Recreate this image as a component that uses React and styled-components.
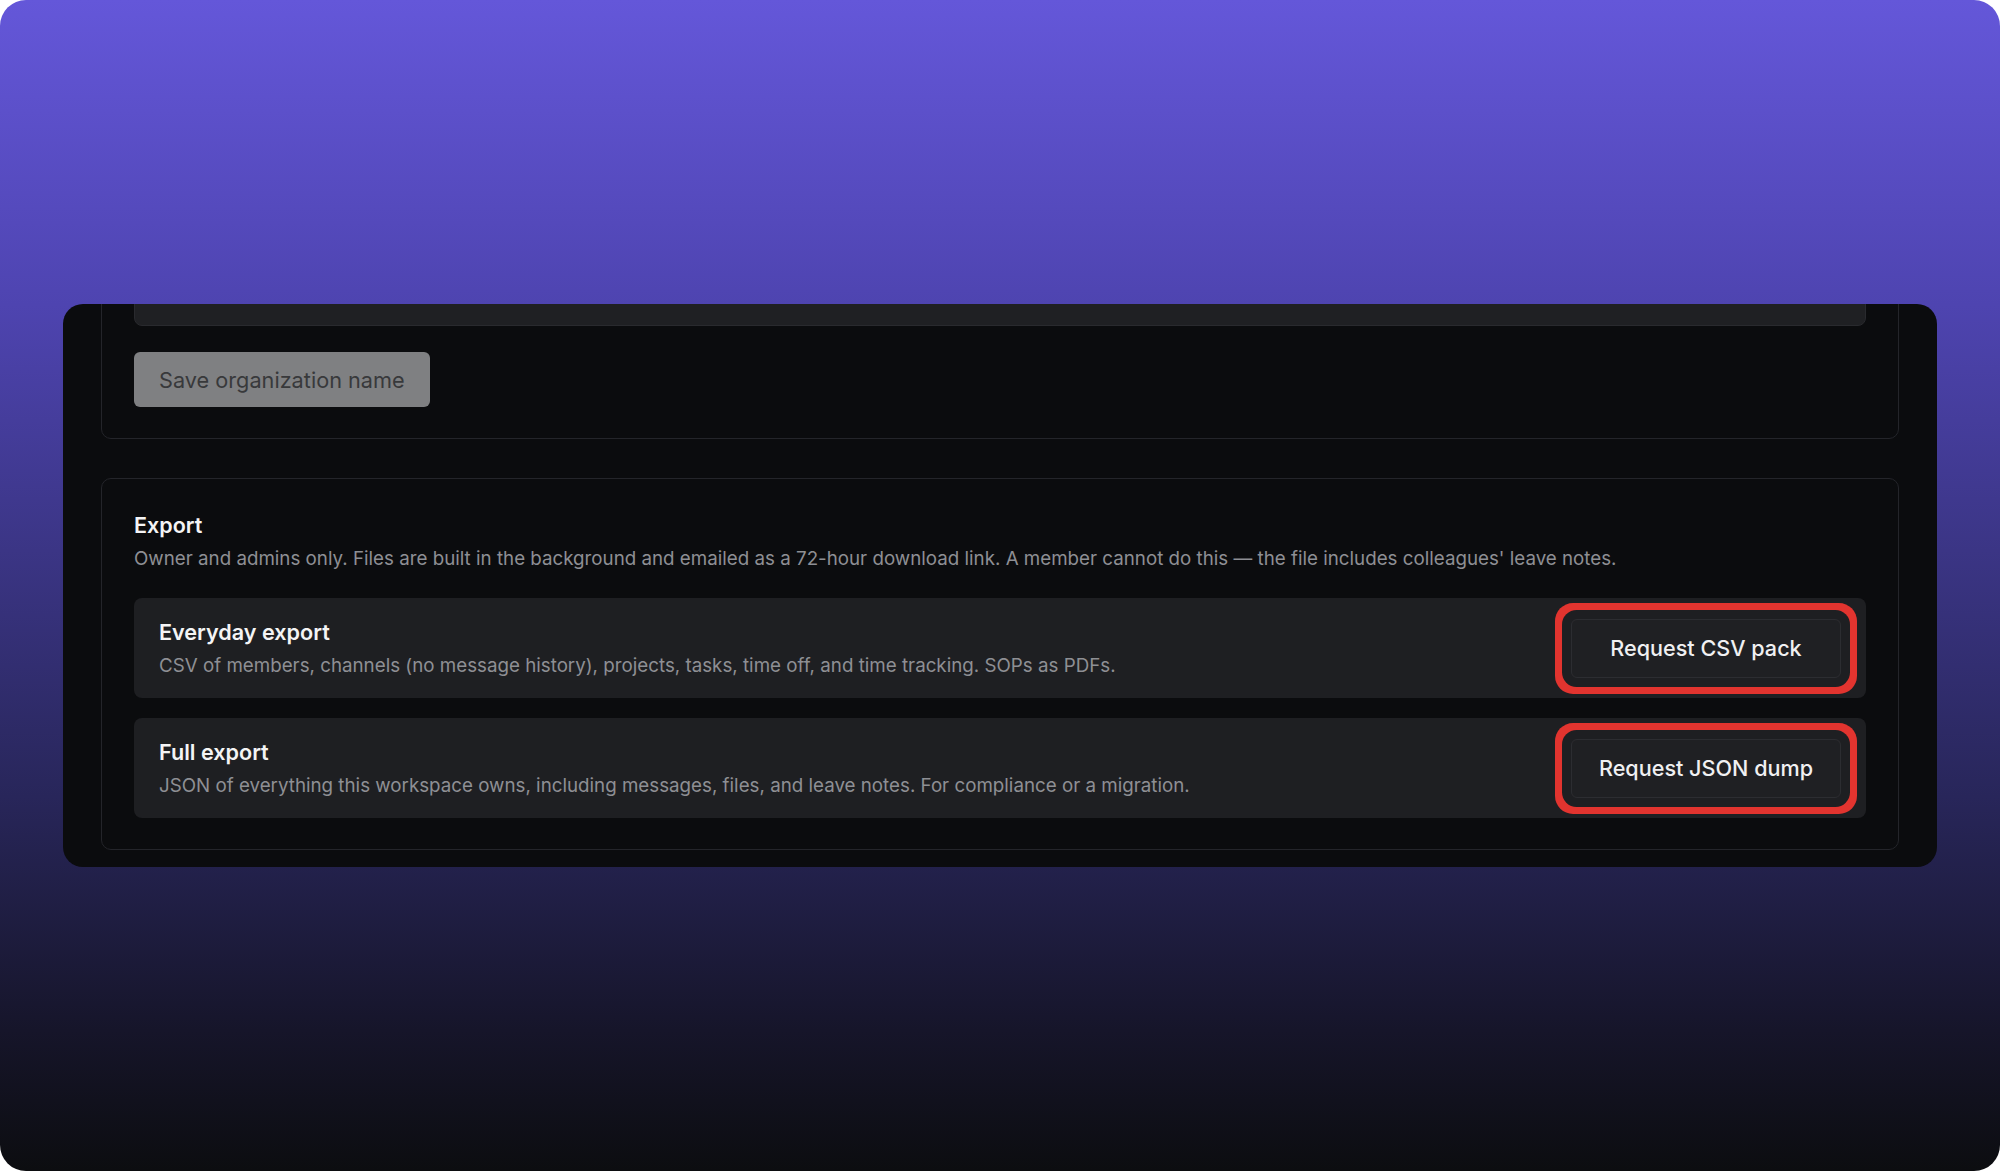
import React from "react";
import styled, { createGlobalStyle } from "styled-components";

const GlobalStyle = createGlobalStyle`
  * { box-sizing: border-box; }
  body {
    margin: 0;
    background: #ffffff;
    font-family: Inter, "Noto Sans", sans-serif;
    -webkit-font-smoothing: antialiased;
  }
`;

const exportsList = [
  {
    id: "csv",
    title: "Everyday export",
    text: "CSV of members, channels (no message history), projects, tasks, time off, and time tracking. SOPs as PDFs.",
    action: "Request CSV pack",
  },
  {
    id: "json",
    title: "Full export",
    text: "JSON of everything this workspace owns, including messages, files, and leave notes. For compliance or a migration.",
    action: "Request JSON dump",
  },
];

function App() {
  return (
    <>
      <GlobalStyle />
      <Backdrop>
        <Window>
          <Scroller>
            <Panel>
              <FieldLabel>Organization name</FieldLabel>
              <NameInput defaultValue="Northwind Field Services" readOnly />
              <SaveButton disabled>Save organization name</SaveButton>
            </Panel>
            <Panel>
              <PanelTitle>Export</PanelTitle>
              <PanelText>
                Owner and admins only. Files are built in the background and emailed as a
                72-hour download link. A member cannot do this — the file includes
                colleagues' leave notes.
              </PanelText>
              <Rows>
                {exportsList.map((item) => (
                  <ExportRow key={item.id}>
                    <RowCopy>
                      <RowTitle>{item.title}</RowTitle>
                      <RowText>{item.text}</RowText>
                    </RowCopy>
                    <RequestButton>{item.action}</RequestButton>
                  </ExportRow>
                ))}
              </Rows>
            </Panel>
          </Scroller>
        </Window>
      </Backdrop>
    </>
  );
}
export default App;

const Backdrop = styled.div`
  width: 2000px;
  height: 1171px;
  border-radius: 26px;
  overflow: hidden;
  padding: 304px 63px 0;
  background: linear-gradient(
    180deg,
    #6457d9 0%,
    #4e44b0 26%,
    #28265a 68%,
    #16152a 88%,
    #0c0d10 100%
  );
`;

const Window = styled.div`
  height: 563px;
  border-radius: 20px;
  background: #0b0c0e;
  overflow: hidden;
`;

const Scroller = styled.div`
  height: 100%;
  display: flex;
  flex-direction: column;
  justify-content: flex-end;
  gap: 39px;
  padding: 0 38px 17px;
`;

const Panel = styled.section`
  flex-shrink: 0;
  display: flex;
  flex-direction: column;
  border: 1px solid #24252a;
  border-radius: 10px;
  padding: 32px 32px 31px;
`;

const FieldLabel = styled.label`
  font-size: 19px;
  font-weight: 500;
  color: #d8d8dc;
  margin-bottom: 12px;
`;

const NameInput = styled.input`
  height: 58px;
  border: 1px solid #292a2e;
  border-radius: 8px;
  background: #1f2023;
  color: #55565a;
  font-family: inherit;
  font-size: 20px;
  padding: 0 20px 6px;
  outline: none;
`;

const SaveButton = styled.button`
  align-self: flex-start;
  margin-top: 26px;
  height: 55px;
  padding: 0 25px;
  border: none;
  border-radius: 6px;
  background: #7f8082;
  color: #38393b;
  font-family: inherit;
  font-size: 21.7px;
  font-weight: 400;
`;

const PanelTitle = styled.h2`
  margin: 0;
  font-size: 21.5px;
  line-height: 28px;
  font-weight: 600;
  color: #f4f4f5;
`;

const PanelText = styled.p`
  margin: 7px 0 0;
  font-size: 18.75px;
  line-height: 26px;
  color: #8e8f94;
`;

const Rows = styled.div`
  display: flex;
  flex-direction: column;
  gap: 20px;
  margin-top: 26px;
`;

const ExportRow = styled.div`
  height: 100px;
  display: flex;
  align-items: center;
  justify-content: space-between;
  padding: 0 25px;
  border-radius: 8px;
  background: #1e1f22;
`;

const RowCopy = styled.div`
  display: flex;
  flex-direction: column;
  gap: 7px;
`;

const RowTitle = styled.div`
  font-size: 21.6px;
  line-height: 27px;
  font-weight: 600;
  color: #f4f4f5;
`;

const RowText = styled.div`
  font-size: 18.75px;
  line-height: 25px;
  color: #8e8f94;
`;

const RequestButton = styled.button`
  width: 270px;
  height: 59px;
  border: 1px solid #2c2d31;
  border-radius: 6px;
  background: #1f2023;
  color: #f0f0f2;
  font-family: inherit;
  font-size: 21.6px;
  font-weight: 500;
  box-shadow: 0 0 0 9px #1e1f22, 0 0 0 16px #e2342f;
`;
